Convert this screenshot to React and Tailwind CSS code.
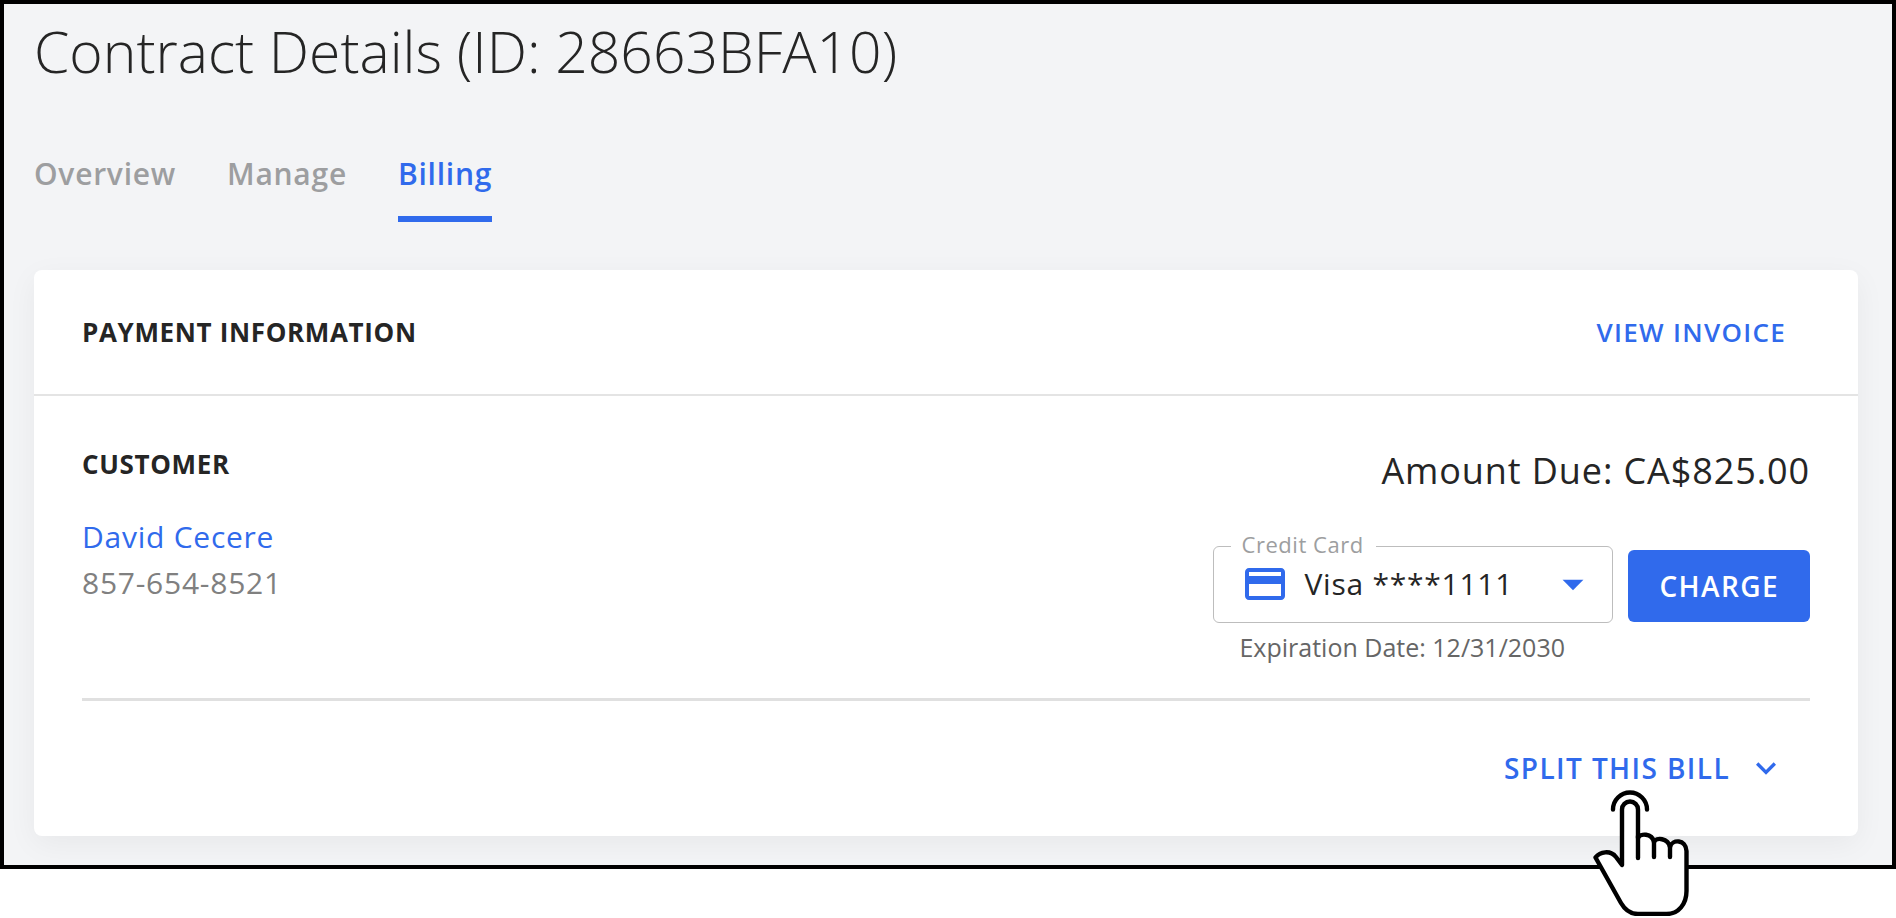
import React, { useState } from 'react';
import { MdOutlineCreditCard, MdArrowDropDown, MdKeyboardArrowDown } from 'react-icons/md';
import clsx from 'clsx';

const TABS = ['Overview', 'Manage', 'Billing'];

const CARDS = [{ id: 'visa-1111', label: 'Visa ****1111', expires: '12/31/2030' }];

const TapHand = ({ className }) => (
  <svg
    className={className}
    viewBox="0 0 100 128"
    fill="none"
    stroke="#000"
    strokeWidth="4.4"
    strokeLinecap="round"
    strokeLinejoin="round"
    aria-hidden="true"
  >
    <path d="M21 21.5a17 17 0 0 1 34 0" />
    <path
      fill="#fff"
      d="M30 77V21.5a8 8 0 0 1 16 0V50c2-5 14-5 16 4 2-5 14-4 16 5 2-8 16-8 16.5 4v40c0 13-8 23-20 23H46c-8 0-13-4-17-11L3.500 69.500C8 64 18 61.500 24 69z"
    />
    <path d="M46 48v22M62 54v15M78 58v11" />
  </svg>
);

const Tabs = ({ active, onChange }) => (
  <nav className="mt-[71px] flex gap-[51px]">
    {TABS.map((tab) => (
      <button
        key={tab}
        type="button"
        onClick={() => onChange(tab)}
        className={clsx(
          'border-b-6 pb-[22px] text-[30px] leading-10 font-semibold tracking-wide',
          tab === active ? 'border-[#306aec] text-[#306aec]' : 'border-transparent text-[#9d9ea0]'
        )}
      >
        {tab}
      </button>
    ))}
  </nav>
);

const CardSelect = () => {
  const [cardId, setCardId] = useState(CARDS[0].id);
  const card = CARDS.find((item) => item.id === cardId);

  return (
    <div className="w-[400px]">
      <fieldset className="rounded-md border border-[#bdbdbd] pb-[17px]">
        <legend className="ml-[17px] pr-3 pb-1 pl-[10px] text-[22px] leading-[30px] tracking-wide text-[#9d9ea0]">
          <label htmlFor="credit-card">Credit Card</label>
        </legend>
        <div className="relative flex h-[42px] items-center gap-[15px] pl-[27px]">
          <MdOutlineCreditCard className="size-12 shrink-0 text-[#306aec]" />
          <select
            id="credit-card"
            value={cardId}
            onChange={(e) => setCardId(e.target.value)}
            className="w-full appearance-none bg-transparent text-[30px] leading-10 tracking-wide text-[#252525] outline-none"
          >
            {CARDS.map((item) => (
              <option key={item.id} value={item.id}>{item.label}</option>
            ))}
          </select>
          <MdArrowDropDown className="pointer-events-none absolute right-[14px] size-[50px] text-[#306aec]" />
        </div>
      </fieldset>
      <p className="mt-2 pb-0.5 pl-[26px] text-[25px] leading-8 text-[#666]">
        Expiration Date: {card.expires}
      </p>
    </div>
  );
};

const App = () => {
  const [tab, setTab] = useState('Billing');

  return (
    <div className="bg-white pb-12 font-['Open_Sans',sans-serif] text-[#252525]">
      <main className="border-4 border-black bg-[#f3f4f6] pt-[15px] pr-[34px] pb-[29px] pl-[30px]">
        <h1 className="text-[57px] leading-16 font-light">Contract Details (ID: 28663BFA10)</h1>

        <Tabs active={tab} onChange={setTab} />

        <section className="mt-12 rounded-lg bg-white shadow-[0_8px_30px_rgba(0,0,0,0.05)]">
          <header className="flex items-center justify-between border-b-2 border-[#e4e4e4] py-[42px] pr-[72px] pl-12">
            <h2 className="text-[26px] leading-10 font-bold tracking-wide">PAYMENT INFORMATION</h2>
            <button type="button" className="text-[26px] leading-10 font-semibold tracking-wider text-[#306aec]">
              VIEW INVOICE
            </button>
          </header>

          <div className="px-12 pt-12 pb-12">
            <div className="flex justify-between">
              <div>
                <h3 className="text-[26px] leading-10 font-bold tracking-wide">CUSTOMER</h3>
                <a href="#customer" className="mt-[30px] block text-[30px] leading-[46px] tracking-wide text-[#306aec]">
                  David Cecere
                </a>
                <p className="text-[30px] leading-[46px] tracking-wide text-[#808080]">857-654-8521</p>
              </div>

              <div className="flex flex-col items-end">
                <p className="text-4xl leading-[54px] tracking-wide">Amount Due: CA$825.00</p>
                <div className="mt-[31px] flex items-start gap-[15px]">
                  <CardSelect />
                  <button
                    type="button"
                    className="mt-[21px] h-[72px] rounded-md bg-[#306aec] px-[31px] text-[28px] leading-10 font-semibold tracking-wider text-white"
                  >
                    CHARGE
                  </button>
                </div>
              </div>
            </div>

            <hr className="mt-[33px] border-t-3 border-[#e0e0e0]" />

            <div className="relative mt-[47px] flex justify-end pr-6">
              <button
                type="button"
                className="flex items-center gap-4 text-[28px] leading-10 font-semibold tracking-wider text-[#306aec]"
              >
                SPLIT THIS BILL
                <MdKeyboardArrowDown className="size-10" />
              </button>
              <TapHand className="pointer-events-none absolute top-full right-[118px] h-32 w-[100px]" />
            </div>
          </div>
        </section>
      </main>
    </div>
  );
};

export default App;
